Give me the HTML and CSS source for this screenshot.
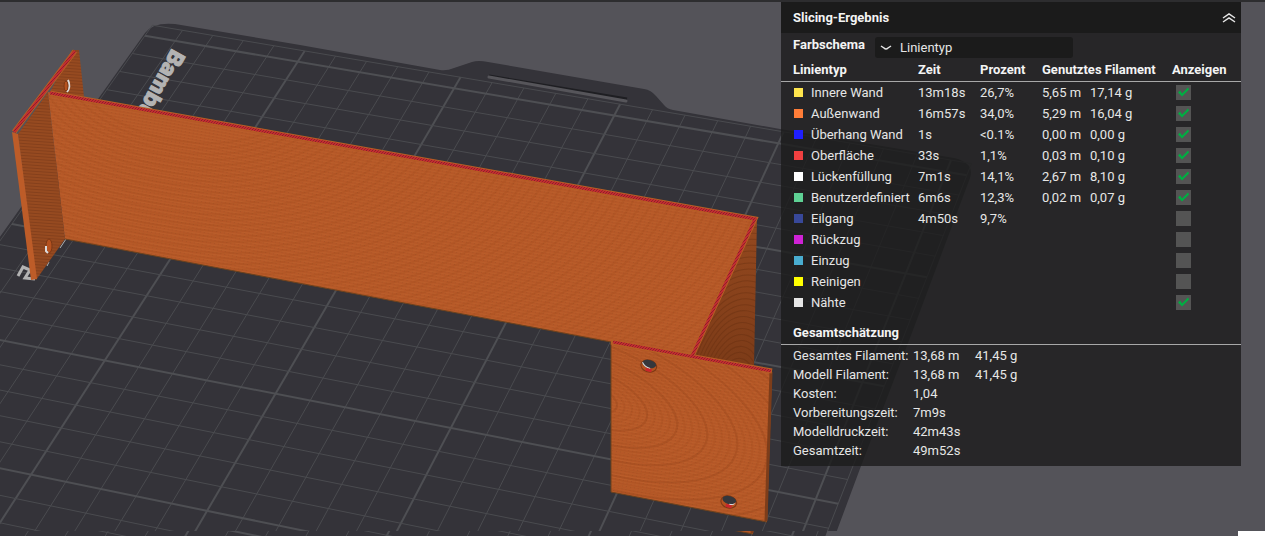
FILE: index.html
```html
<!DOCTYPE html>
<html lang="de">
<head>
<meta charset="utf-8">
<title>Slicing-Ergebnis</title>
<link rel="stylesheet" href="styles.css">
</head>
<body>
<main class="viewport">
  <svg class="scene" viewBox="0 0 1265 536" preserveAspectRatio="xMinYMin slice" aria-hidden="true">
    <defs>
      <pattern id="weave" width="4" height="3" patternUnits="userSpaceOnUse" patternTransform="rotate(10)">
        <rect width="4" height="3" fill="#b65827"/>
        <rect width="4" height="1" fill="#ba5e2b"/>
        <rect x="1" y="1" width="1" height="1" fill="#aa5426"/>
      </pattern>
      <pattern id="layers" width="6" height="3" patternUnits="userSpaceOnUse" patternTransform="rotate(4)">
        <rect width="6" height="3" fill="#964a20"/>
        <rect width="6" height="1" fill="#85401c"/>
      </pattern>
      <pattern id="redline" width="3" height="3" patternUnits="userSpaceOnUse">
        <rect width="3" height="3" fill="#c22b31"/>
        <rect width="1" height="1" fill="#8a2028"/>
        <rect x="2" y="1" width="1" height="1" fill="#962228"/>
        <rect x="1" y="2" width="1" height="1" fill="#962228"/>
      </pattern>
      <linearGradient id="sideShade" x1="0" y1="0" x2="0" y2="1">
        <stop offset="0" stop-color="#95491f"/>
        <stop offset="1" stop-color="#7c3b18"/>
      </linearGradient>
      <clipPath id="mainFace"><path d="M48 93 752 220 692 356 611 342 65 239Z"/></clipPath>
      <clipPath id="frontFace"><path d="M611 342 772 371 767 522 611 492Z"/></clipPath>
      <clipPath id="sideFace"><path d="M757 218 754 366 692 356Z"/></clipPath>
      <clipPath id="upper"><rect width="1265" height="531"/></clipPath>
      <clipPath id="strip"><rect y="531" width="1265" height="5"/></clipPath>
    </defs>
    <g clip-path="url(#upper)">
      <g id="model">
        <path class="plate" d="M-30 279 145 33Q153 22 175 24L300 45 440 70Q447 71 454 68L472 62Q478 60 488 62L644 89Q651 90 656 96L664 105Q667 109 673 110L780 129 954 158Q975 163 970 178L913 330 861 466 826 560-30 560Z"/>
        <g id="grid"></g>
        <path class="slot-shade" d="M489 76 627 99"/>
        <path class="slot" d="M489 77 626 101"/>
        <text class="brand" transform="translate(172 48) rotate(119)">Bambu</text>
        <path class="mark" d="M18 276 23 267 30 270 25 278 35 279"/>
        <path class="purge" d="M47 266 49 262M60 248 66 239"/>

        <path fill="url(#layers)" d="M72 50 79 50 84 97 50 92Z"/>
        <path class="hole-light" d="M68 80Q71 87 67 92"/>
        <ellipse class="bore" cx="66" cy="86" rx="2" ry="5"/>

        <path fill="url(#layers)" d="M18 134 48 92 65 239 36 280Z"/>
        <path class="edge" d="M12 132 18 134 37 279 31 280Z"/>
        <ellipse class="bore" cx="49" cy="246" rx="3" ry="7"/>
        <path class="hole-light" d="M46 246V251L48 253"/>

        <path fill="url(#weave)" d="M48 92 757 218 692 356 611 342 65 239Z"/>
        <g id="mainRings" clip-path="url(#mainFace)"></g>
        <path fill="url(#sideShade)" d="M757 218 754 366 692 356Z"/>
        <g id="sideRings" clip-path="url(#sideFace)"></g>
        <path fill="url(#weave)" d="M611 342 772 371 767 522 611 492Z"/>
        <g id="frontRings" clip-path="url(#frontFace)"></g>
        <path class="dark-edge" d="M771 372 766 521"/>
        <path class="rim" d="M611 342V492L767 522M65 239 611 342"/>

        <path class="seam" d="M75 51 14 132M50 93 755 219 692 356M611 342 772 371"/>
        <path class="top" d="M75 51 14 132M50 93 755 219 692 356M613 342 771 371"/>

        <g transform="translate(649 365) rotate(15)">
          <ellipse class="bore" rx="8" ry="6" cy="1"/>
          <ellipse class="void" rx="7" ry="4" cy="-1"/>
          <path class="hole-light thin" d="M-7-1Q-4 3 2 3"/>
          <path class="red" d="M-2 5H4"/>
        </g>
        <g transform="translate(729 501) rotate(15)">
          <ellipse class="bore" rx="8" ry="6" cy="1"/>
          <ellipse class="void" rx="7" ry="4" cy="-1"/>
          <path class="hole-light thin" d="M1 3Q5 3 6 1"/>
          <path class="red" d="M-2 5H4"/>
        </g>
      </g>
    </g>
    <g clip-path="url(#strip)"><use href="#model" x="-14" y="12"/></g>
    <rect x="1238" y="531" width="27" height="5" fill="#fff"/>
  </svg>

  <section class="panel">
    <header class="panel-head">
      <h1>Slicing-Ergebnis</h1>
      <button class="collapse" type="button" aria-label="Einklappen">
        <svg width="14" height="12" viewBox="0 0 14 12"><path d="M1 6 7 2 13 6M1 10 7 6 13 10"/></svg>
      </button>
    </header>
    <div class="scheme">
      <label for="scheme">Farbschema</label>
      <div class="select-box">
        <svg width="12" height="6" viewBox="0 0 12 6"><path d="M1 1 4 3Q6 5 8 3L11 1"/></svg>
        <select id="scheme"><option>Linientyp</option></select>
      </div>
    </div>
    <table class="types">
      <colgroup><col class="c-name"><col class="c-time"><col class="c-pct"><col class="c-len"><col class="c-mass"><col></colgroup>
      <thead><tr><th>Linientyp</th><th>Zeit</th><th>Prozent</th><th colspan="2">Genutztes Filament</th><th>Anzeigen</th></tr></thead>
      <tbody>
        <tr><td><i class="sw yellow"></i>Innere Wand</td><td>13m18s</td><td>26,7%</td><td>5,65 m</td><td>17,14 g</td><td><input type="checkbox" aria-label="Innere Wand" checked></td></tr>
        <tr><td><i class="sw orange"></i>Außenwand</td><td>16m57s</td><td>34,0%</td><td>5,29 m</td><td>16,04 g</td><td><input type="checkbox" aria-label="Außenwand" checked></td></tr>
        <tr><td><i class="sw blue"></i>Überhang Wand</td><td>1s</td><td>&lt;0.1%</td><td>0,00 m</td><td>0,00 g</td><td><input type="checkbox" aria-label="Überhang Wand" checked></td></tr>
        <tr><td><i class="sw redsw"></i>Oberfläche</td><td>33s</td><td>1,1%</td><td>0,03 m</td><td>0,10 g</td><td><input type="checkbox" aria-label="Oberfläche" checked></td></tr>
        <tr><td><i class="sw white"></i>Lückenfüllung</td><td>7m1s</td><td>14,1%</td><td>2,67 m</td><td>8,10 g</td><td><input type="checkbox" aria-label="Lückenfüllung" checked></td></tr>
        <tr><td><i class="sw green"></i>Benutzerdefiniert</td><td>6m6s</td><td>12,3%</td><td>0,02 m</td><td>0,07 g</td><td><input type="checkbox" aria-label="Benutzerdefiniert" checked></td></tr>
        <tr><td><i class="sw navy"></i>Eilgang</td><td>4m50s</td><td>9,7%</td><td></td><td></td><td><input type="checkbox" aria-label="Eilgang"></td></tr>
        <tr><td><i class="sw magenta"></i>Rückzug</td><td></td><td></td><td></td><td></td><td><input type="checkbox" aria-label="Rückzug"></td></tr>
        <tr><td><i class="sw sky"></i>Einzug</td><td></td><td></td><td></td><td></td><td><input type="checkbox" aria-label="Einzug"></td></tr>
        <tr><td><i class="sw bright"></i>Reinigen</td><td></td><td></td><td></td><td></td><td><input type="checkbox" aria-label="Reinigen"></td></tr>
        <tr><td><i class="sw pale"></i>Nähte</td><td></td><td></td><td></td><td></td><td><input type="checkbox" aria-label="Nähte" checked></td></tr>
      </tbody>
    </table>
    <h2>Gesamtschätzung</h2>
    <dl class="totals">
      <dt>Gesamtes Filament:</dt><dd>13,68 m</dd><dd>41,45 g</dd>
      <dt>Modell Filament:</dt><dd>13,68 m</dd><dd>41,45 g</dd>
      <dt>Kosten:</dt><dd>1,04</dd>
      <dt>Vorbereitungszeit:</dt><dd>7m9s</dd>
      <dt>Modelldruckzeit:</dt><dd>42m43s</dd>
      <dt>Gesamtzeit:</dt><dd>49m52s</dd>
    </dl>
  </section>
</main>
<script src="scene.js"></script>
</body>
</html>
```

FILE: styles.css
```css
* { box-sizing: border-box; }

body {
  margin: 0;
  background: #545359;
  color: #e6e6e6;
  font: 13px/19px Roboto, "Open Sans", sans-serif;
}

.viewport {
  position: relative;
  display: flex;
  justify-content: flex-end;
  align-items: flex-start;
  min-height: 100vh;
  padding-right: 24px;
  border-top: 2px solid #2d2d2f;
  overflow: hidden;
}

/* 3D view behind the panel */
.scene {
  position: absolute;
  left: 0;
  top: -2px;
  width: 100%;
  height: 100vh;
}
.plate { fill: #343339; }
.grid-line { stroke: #4a4b4f; stroke-width: 1; fill: none; }
.grid-line.major { stroke: #4e4f53; stroke-width: 2; }
.slot { stroke: #56555a; stroke-width: 3; stroke-linecap: round; }
.slot-shade { stroke: #1e1e22; stroke-width: 3; }
.brand { fill: #b3b3b3; stroke: #b3b3b3; stroke-width: 1; font: 800 22px Inter, sans-serif; }
.mark { fill: none; stroke: #b3b3b3; stroke-width: 3; }
.purge { fill: none; stroke: #b3b3b3; stroke-width: 1; }
.edge { fill: #bd5c28; }
.dark-edge { fill: none; stroke: #7d3d1a; stroke-width: 3; }
.rim { fill: none; stroke: #6d421d; stroke-width: 1; }
.seam { fill: none; stroke: #b65f24; stroke-width: 5; }
.top { fill: none; stroke: url(#redline); stroke-width: 3; }
.ring { fill: none; stroke: #7a3411; stroke-opacity: .08; stroke-width: 2; }
.ring.strong { stroke-opacity: .1; }
.ring.deep { stroke: #5a280c; stroke-opacity: .3; stroke-width: 1; }
.bore { fill: #b5521f; stroke: #7c3815; stroke-width: 1; }
.void { fill: #35373c; }
.hole-light { fill: none; stroke: #dcdcdc; stroke-width: 2; }
.hole-light.thin { stroke-width: 1; }
.red { stroke: #c9252c; stroke-width: 3; }

/* Result panel */
.panel {
  position: relative;
  width: 460px;
  padding-bottom: 6px;
  background: rgba(27, 27, 27, .8);
}
.panel-head {
  display: flex;
  align-items: center;
  justify-content: space-between;
  height: 31px;
  padding: 0 5px 0 12px;
  background: #1b1b1b;
}
h1, h2 { margin: 0; color: #f4f4f4; font-size: 13px; line-height: 19px; font-weight: 700; }
.collapse { display: flex; padding: 0; border: 0; background: none; }
.collapse svg, .select-box svg { fill: none; stroke: #e6e6e6; stroke-width: 1.5; }

.scheme {
  display: flex;
  align-items: flex-start;
  gap: 8px;
  height: 26px;
  padding: 2px 0 0 12px;
}
.scheme label { width: 74px; color: #f4f4f4; font-weight: 700; }
.select-box {
  display: flex;
  align-items: center;
  gap: 8px;
  width: 198px;
  height: 21px;
  margin-top: 2px;
  padding-left: 5px;
  border-radius: 3px;
  background: #1b1b1b;
}
.select-box select {
  flex: 1;
  appearance: none;
  padding: 0;
  border: 0;
  background: none;
  color: inherit;
  font: inherit;
}

.types { width: 100%; table-layout: fixed; border-collapse: collapse; }
.c-name { width: 137px; }
.c-time, .c-pct { width: 62px; }
.c-len { width: 48px; }
.c-mass { width: 82px; }
.types th, .types td { padding: 0; text-align: left; white-space: nowrap; }
.types th { height: 22px; color: #f4f4f4; font-weight: 700; border-bottom: 1px solid #a8a8a8; }
.types td { height: 21px; line-height: 21px; }
.types th:first-child { padding-left: 12px; }
.types td:first-child { padding-left: 13px; }
.types td:last-child { padding-left: 4px; }
.sw { display: inline-block; width: 9px; height: 9px; margin-right: 8px; }
.yellow { background: #ffe54d; }
.orange { background: #ff7d38; }
.blue { background: #1f1fff; }
.redsw { background: #f04040; }
.white { background: #fff; }
.green { background: #5ed194; }
.navy { background: #384899; }
.magenta { background: #cf22d6; }
.sky { background: #49add0; }
.bright { background: #ff0; }
.pale { background: #e6e6e6; }

.types input {
  appearance: none;
  display: block;
  width: 15px;
  height: 15px;
  margin: 0;
  background: #545454;
}
.types input:checked::before {
  content: "";
  display: block;
  width: 15px;
  height: 15px;
  background: #00ae42;
  clip-path: polygon(2px 8px, 4px 6px, 6px 9px, 12px 3px, 13px 5px, 6px 12px);
}

h2 { padding: 10px 12px 2px; border-bottom: 1px solid #a8a8a8; }
.totals {
  display: grid;
  grid-template-columns: 120px 62px 1fr;
  margin: 0;
  padding: 1px 0 0 12px;
  white-space: nowrap;
}
.totals dt { grid-column: 1; }
.totals dd { margin: 0; }
```

FILE: scene.js
```js
const NS = 'http://www.w3.org/2000/svg';

// Bed coordinates (10 mm cells) and where four of them land on screen.
const anchors = [
  [0, 5, 31, 474.7],
  [0, -15, 297.7, 61.7],
  [20, 0, 815.7, 499.3],
  [15, -15, 778.3, 143.3]
];

function solve(m) {
  const n = m.length;
  for (let i = 0; i < n; i++) {
    let p = i;
    for (let r = i; r < n; r++) if (Math.abs(m[r][i]) > Math.abs(m[p][i])) p = r;
    [m[i], m[p]] = [m[p], m[i]];
    for (let r = 0; r < n; r++) {
      if (r === i) continue;
      const f = m[r][i] / m[i][i];
      for (let c = i; c <= n; c++) m[r][c] -= f * m[i][c];
    }
  }
  return m.map((row, i) => row[n] / row[i]);
}

const rows = [];
for (const [u, v, x, y] of anchors) {
  rows.push([u, v, 1, 0, 0, 0, -u * x, -v * x, x]);
  rows.push([0, 0, 0, u, v, 1, -u * y, -v * y, y]);
}
const h = solve(rows);
const project = (u, v) => {
  const w = h[6] * u + h[7] * v + 1;
  return [(h[0] * u + h[1] * v + h[2]) / w, (h[3] * u + h[4] * v + h[5]) / w];
};

const grid = document.getElementById('grid');
function line(a, b, major) {
  const el = document.createElementNS(NS, 'path');
  el.setAttribute('d', `M${project(...a)}L${project(...b)}`);
  el.setAttribute('class', major ? 'grid-line major' : 'grid-line');
  grid.append(el);
}
const left = -5, right = 20.6, back = -15.6, front = 10;
for (let u = left; u <= 20; u++) line([u, back], [u, front], u % 5 === 0 && u !== left);
for (let v = -15; v <= front; v++) line([left, v], [right, v], v % 5 === 0);
line([right, back], [right, front], false);
line([left, back], [right, back], false);

// Interference rings that the printed layers show on each face.
function rings(id, cx, cy, ratio, angle, from, to, step, look) {
  const g = document.getElementById(id);
  for (let r = from; r < to; r += step) {
    const el = document.createElementNS(NS, 'ellipse');
    el.setAttribute('class', `ring ${look}`);
    el.setAttribute('rx', r);
    el.setAttribute('ry', r * ratio);
    el.setAttribute('transform', `translate(${cx} ${cy}) rotate(${angle})`);
    g.append(el);
  }
}
rings('mainRings', 190, 70, 0.6, 8, 120, 760, 9, '');
rings('sideRings', 735, 400, 2, 8, 12, 100, 3, 'deep');
rings('frontRings', 585, 395, 0.42, 22, 34, 300, 8, '');
rings('frontRings', 585, 395, 0.42, 22, 34, 300, 32, 'strong');
```
